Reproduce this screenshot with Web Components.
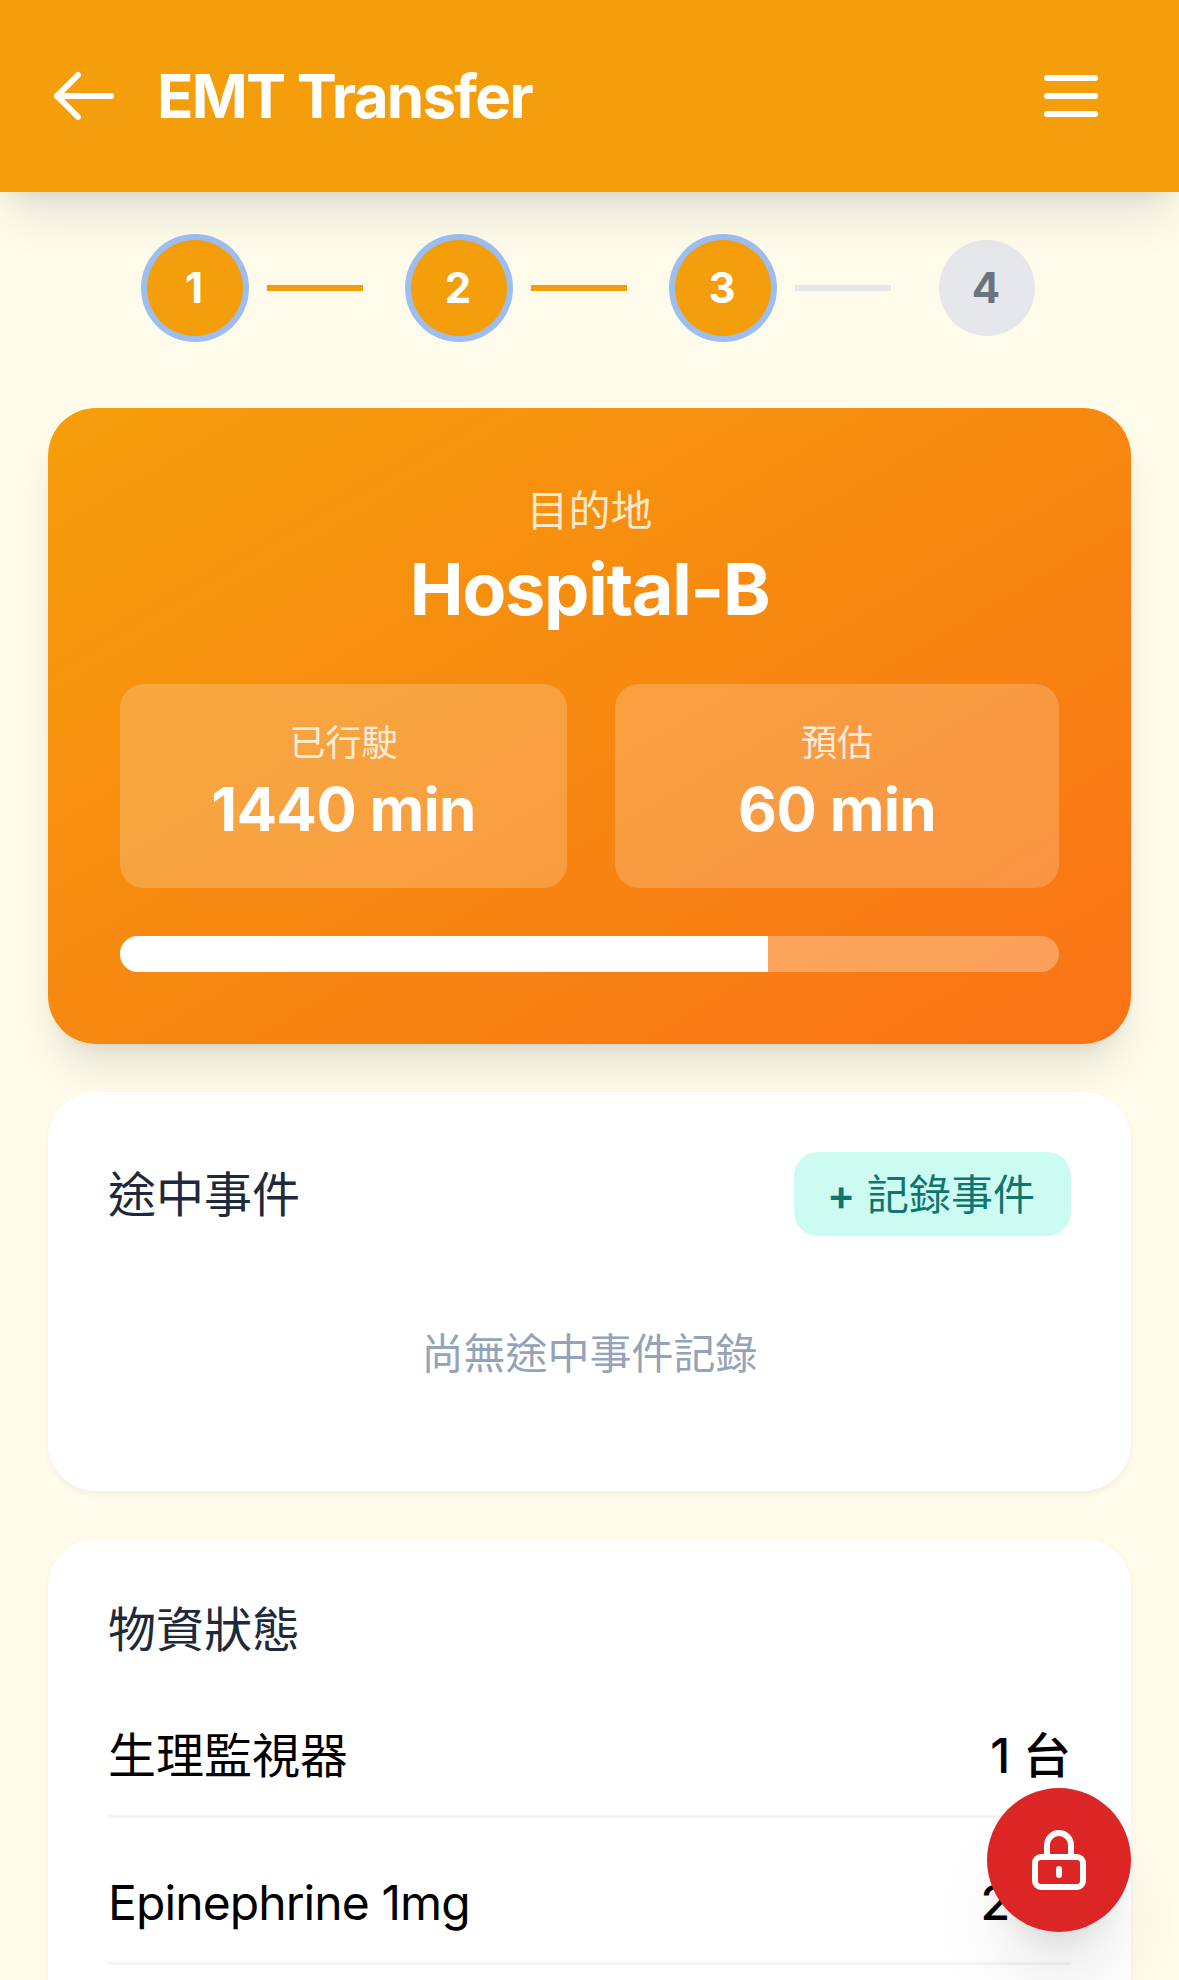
<!DOCTYPE html>
<html lang="zh-Hant">
<head>
<meta charset="utf-8">
<title>EMT Transfer</title>
<style>
  html, body { margin: 0; height: 1980px; overflow: hidden; background: #fffbeb; }
  body { font-family: Inter, "Noto Sans CJK TC", sans-serif; }
</style>
</head>
<body>
<emt-app>
  <emt-header title="EMT Transfer"></emt-header>
  <emt-steps current="3" total="4"></emt-steps>
  <transfer-card destination="Hospital-B" elapsed="1440 min" eta="60 min" progress="69"></transfer-card>
  <section-card heading="途中事件">
    <button-add slot="action"><span style="font-weight: 600">+</span> 記錄事件</button-add>
    <empty-note>尚無途中事件記錄</empty-note>
  </section-card>
  <section-card heading="物資狀態" tight>
    <supply-row name="生理監視器" value="1 台"></supply-row>
    <supply-row name="Epinephrine 1mg" value="2 支" style="--track: -0.9px"></supply-row>
  </section-card>
</emt-app>
<lock-fab></lock-fab>

<script>
class EmtApp extends HTMLElement {
	constructor() {
		super()
		this.attachShadow({ mode: 'open' })
		this.shadowRoot.innerHTML = /* html */ `
      <style>
        :host { display: block; }
      </style>
      <slot></slot>
    `
	}
}

class EmtHeader extends HTMLElement {
	constructor() {
		super()
		this.attachShadow({ mode: 'open' })
	}

	connectedCallback() {
		this.shadowRoot.innerHTML = /* html */ `
      <style>
        :host {
          display: flex;
          align-items: center;
          justify-content: space-between;
          height: 192px;
          padding: 0 48px;
          box-sizing: border-box;
          background: #f59e0b;
          color: #fff;
          box-shadow: 0 30px 45px -9px rgba(0, 0, 0, 0.1), 0 12px 18px -12px rgba(0, 0, 0, 0.1);
          position: relative;
        }
        .left { display: flex; align-items: center; gap: 37px; }
        h1 { margin: 0; font-size: 60px; line-height: 84px; font-weight: 700; letter-spacing: -1.7px; }
        svg { display: block; width: 72px; height: 72px; fill: none; stroke: currentColor; stroke-width: 2; stroke-linecap: round; stroke-linejoin: round; }
        .menu { padding: 24px; }
      </style>
      <div class="left">
        <svg viewBox="0 0 24 24"><path d="M10 19l-7-7m0 0l7-7m-7 7h18"/></svg>
        <h1>${this.getAttribute('title')}</h1>
      </div>
      <div class="menu">
        <svg viewBox="0 0 24 24"><path d="M4 6h16M4 12h16M4 18h16"/></svg>
      </div>
    `
	}
}

class EmtSteps extends HTMLElement {
	constructor() {
		super()
		this.attachShadow({ mode: 'open' })
	}

	connectedCallback() {
		const current = Number(this.getAttribute('current'))
		const total = Number(this.getAttribute('total'))
		let html = ''
		for (let i = 1; i <= total; i++) {
			html += `<div class="dot ${i <= current ? 'on' : ''}">${i}</div>`
			if (i < total) html += `<div class="line ${i < current ? 'on' : ''}"></div>`
		}
		this.shadowRoot.innerHTML = /* html */ `
      <style>
        :host { display: flex; justify-content: center; align-items: center; padding: 48px 0 48px 3px; }
        .dot {
          width: 96px;
          height: 96px;
          box-sizing: border-box;
          padding: 0 2px 2px 0;
          border-radius: 50%;
          background: #e5e7eb;
          color: #6b7280;
          font-size: 42px;
          font-weight: 700;
          display: flex;
          align-items: center;
          justify-content: center;
        }
        .dot.on { background: #f59e0b; color: #fff; box-shadow: 0 0 0 6px #9dbff0; }
        .line { width: 96px; height: 6px; margin: 0 48px 0 24px; background: #e5e7eb; }
        .line.on { background: #f59e0b; }
      </style>
      ${html}
    `
	}
}

class TransferCard extends HTMLElement {
	constructor() {
		super()
		this.attachShadow({ mode: 'open' })
	}

	connectedCallback() {
		const a = n => this.getAttribute(n)
		this.shadowRoot.innerHTML = /* html */ `
      <style>
        :host {
          display: block;
          margin: 24px 48px 48px;
          padding: 72px;
          height: 636px;
          box-sizing: border-box;
          border-radius: 48px;
          color: #fff;
          text-align: center;
          background: linear-gradient(to bottom right, #f59e0b, #f97316);
          box-shadow: 0 30px 45px -9px rgba(0, 0, 0, 0.1), 0 12px 18px -12px rgba(0, 0, 0, 0.1);
        }
        .label { font-size: 42px; line-height: 60px; padding-top: 1px; opacity: 0.8; }
        .dest { font-size: 72px; line-height: 96px; font-weight: 700; letter-spacing: -1.3px; }
        .stats { display: grid; grid-template-columns: 447fr 444fr; gap: 48px; margin-top: 47px; }
        .stat { height: 204px; box-sizing: border-box; padding-top: 36px; border-radius: 24px; background: rgba(255, 255, 255, 0.2); }
        .stat small { display: block; font-size: 36px; line-height: 47px; opacity: 0.8; }
        .stat b { display: block; font-size: 60px; line-height: 84px; font-weight: 700; letter-spacing: -0.7px; }
        .track { height: 36px; margin-top: 48px; border-radius: 18px; overflow: hidden; background: rgba(255, 255, 255, 0.3); }
        .fill { height: 100%; background: #fff; }
      </style>
      <div class="label">目的地</div>
      <div class="dest">${a('destination')}</div>
      <div class="stats">
        <div class="stat"><small>已行駛</small><b>${a('elapsed')}</b></div>
        <div class="stat"><small>預估</small><b>${a('eta')}</b></div>
      </div>
      <div class="track"><div class="fill" style="width: ${a('progress')}%"></div></div>
    `
	}
}

class SectionCard extends HTMLElement {
	constructor() {
		super()
		this.attachShadow({ mode: 'open' })
	}

	connectedCallback() {
		this.shadowRoot.innerHTML = /* html */ `
      <style>
        :host {
          display: block;
          margin: 0 48px 48px;
          padding: 60px;
          border-radius: 48px;
          background: #fff;
          box-shadow: 0 3px 6px rgba(0, 0, 0, 0.05);
        }
        .head { display: flex; align-items: center; justify-content: space-between; }
        h2 { margin: 0; padding-top: 2px; font-size: 48px; line-height: 70px; font-weight: 400; color: #1e293b; }
        :host([tight]) h2 { padding-top: 1px; line-height: 60px; margin-bottom: 11px; }
      </style>
      <div class="head">
        <h2>${this.getAttribute('heading')}</h2>
        <slot name="action"></slot>
      </div>
      <slot></slot>
    `
	}
}

class ButtonAdd extends HTMLElement {
	constructor() {
		super()
		this.attachShadow({ mode: 'open' })
		this.shadowRoot.innerHTML = /* html */ `
      <style>
        :host {
          display: block;
          padding: 13px 36px 11px 33px;
          border-radius: 24px;
          font-size: 42px;
          line-height: 60px;
          font-weight: 400;
          background: #ccfbf1;
          color: #0f766e;
        }
      </style>
      <slot></slot>
    `
	}
}

class EmptyNote extends HTMLElement {
	constructor() {
		super()
		this.attachShadow({ mode: 'open' })
		this.shadowRoot.innerHTML = /* html */ `
      <style>
        :host {
          display: block;
          margin-top: 36px;
          padding: 50px 0 46px;
          text-align: center;
          font-size: 42px;
          line-height: 63px;
          color: #94a3b8;
        }
      </style>
      <slot></slot>
    `
	}
}

class SupplyRow extends HTMLElement {
	constructor() {
		super()
		this.attachShadow({ mode: 'open' })
	}

	connectedCallback() {
		this.shadowRoot.innerHTML = /* html */ `
      <style>
        :host {
          display: flex;
          justify-content: space-between;
          padding: 49px 0 23px;
          font-size: 48px;
          line-height: 72px;
          color: #000;
          border-bottom: 3px solid #f3f4f6;
        }
        .name { letter-spacing: var(--track, 0); }
        .value { font-weight: 500; }
      </style>
      <span class="name">${this.getAttribute('name')}</span>
      <span class="value">${this.getAttribute('value')}</span>
    `
	}
}

class LockFab extends HTMLElement {
	constructor() {
		super()
		this.attachShadow({ mode: 'open' })
		this.shadowRoot.innerHTML = /* html */ `
      <style>
        :host {
          position: fixed;
          right: 48px;
          bottom: 48px;
          width: 144px;
          height: 144px;
          border-radius: 50%;
          background: #dc2626;
          color: #fff;
          display: flex;
          align-items: center;
          justify-content: center;
          box-shadow: 0 60px 75px -15px rgba(0, 0, 0, 0.1), 0 24px 30px -18px rgba(0, 0, 0, 0.1);
        }
        svg { display: block; width: 72px; height: 72px; fill: none; stroke: currentColor; stroke-width: 2; stroke-linecap: round; stroke-linejoin: round; }
      </style>
      <svg viewBox="0 0 24 24"><path d="M12 15v2m-6 4h12a2 2 0 002-2v-6a2 2 0 00-2-2H6a2 2 0 00-2 2v6a2 2 0 002 2zm10-10V7a4 4 0 00-8 0v4h8z"/></svg>
    `
	}
}

customElements.define('emt-app', EmtApp)
customElements.define('emt-header', EmtHeader)
customElements.define('emt-steps', EmtSteps)
customElements.define('transfer-card', TransferCard)
customElements.define('section-card', SectionCard)
customElements.define('button-add', ButtonAdd)
customElements.define('empty-note', EmptyNote)
customElements.define('supply-row', SupplyRow)
customElements.define('lock-fab', LockFab)
</script>
</body>
</html>
